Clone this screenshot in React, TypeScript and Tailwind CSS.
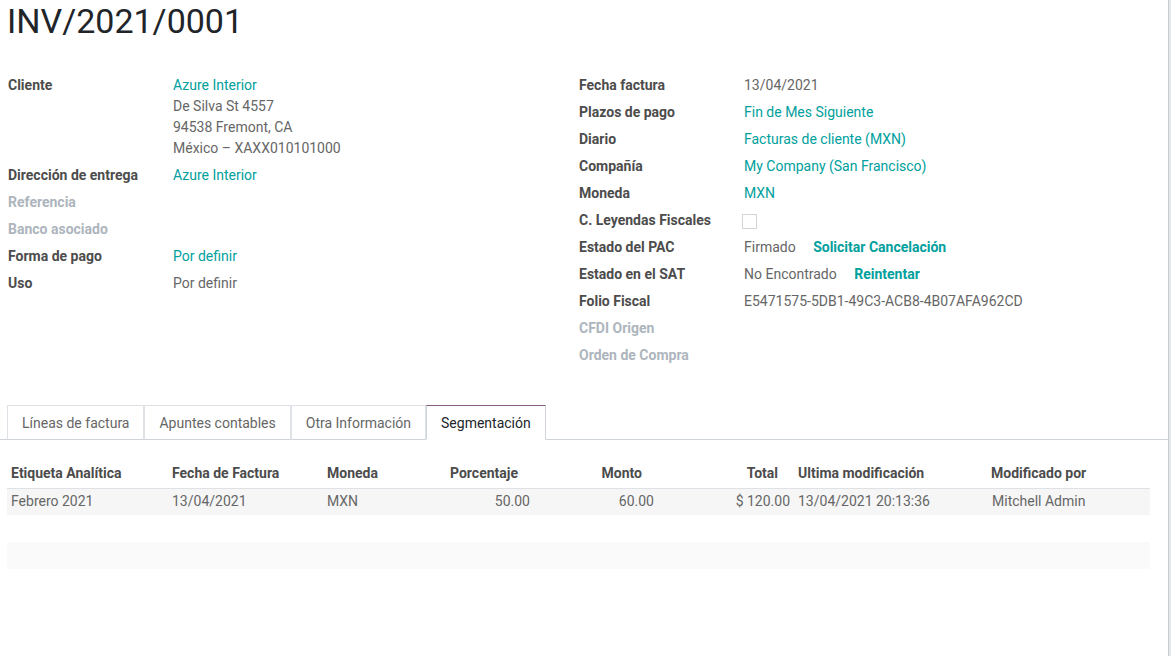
import React from "react";

const teal = "text-[#00a09d]";

type Field = { label: string; value?: React.ReactNode; muted?: boolean };

function FieldRow({ label, value, muted }: Field) {
  return (
    <div className="flex pb-[6px]">
      <div
        className={`w-[165px] shrink-0 font-bold leading-[21px] ${
          muted ? "text-[#adb5bd]" : "text-[#4c4c4c]"
        }`}
      >
        {label}
      </div>
      <div className="leading-[21px] text-[#666666]">{value}</div>
    </div>
  );
}

const leftFields: Field[] = [
  {
    label: "Cliente",
    value: (
      <div>
        <div className={teal}>Azure Interior</div>
        <div>De Silva St 4557</div>
        <div>94538 Fremont, CA</div>
        <div>México – XAXX010101000</div>
      </div>
    ),
  },
  { label: "Dirección de entrega", value: <span className={teal}>Azure Interior</span> },
  { label: "Referencia", muted: true },
  { label: "Banco asociado", muted: true },
  { label: "Forma de pago", value: <span className={teal}>Por definir</span> },
  { label: "Uso", value: "Por definir" },
];

const rightFields: Field[] = [
  { label: "Fecha factura", value: "13/04/2021" },
  { label: "Plazos de pago", value: <span className={teal}>Fin de Mes Siguiente</span> },
  { label: "Diario", value: <span className={teal}>Facturas de cliente (MXN)</span> },
  { label: "Compañía", value: <span className={teal}>My Company (San Francisco)</span> },
  { label: "Moneda", value: <span className={teal}>MXN</span> },
  {
    label: "C. Leyendas Fiscales",
    value: (
      <div className="flex h-[21px] items-center">
        <span className="ml-[-2px] mt-[1px] block h-[15px] w-[15px] border border-[#d4d4d4] bg-white" />
      </div>
    ),
  },
  {
    label: "Estado del PAC",
    value: (
      <span>
        Firmado <span className={`ml-[14px] font-bold ${teal}`}>Solicitar Cancelación</span>
      </span>
    ),
  },
  {
    label: "Estado en el SAT",
    value: (
      <span>
        No Encontrado <span className={`ml-[14px] font-bold ${teal}`}>Reintentar</span>
      </span>
    ),
  },
  { label: "Folio Fiscal", value: "E5471575-5DB1-49C3-ACB8-4B07AFA962CD" },
  { label: "CFDI Origen", muted: true },
  { label: "Orden de Compra", muted: true },
];

const tabs = ["Líneas de factura", "Apuntes contables", "Otra Información", "Segmentación"];

const cols = [
  { name: "Etiqueta Analítica", w: "w-[161px]", right: false },
  { name: "Fecha de Factura", w: "w-[155px]", right: false },
  { name: "Moneda", w: "w-[122px]", right: false },
  { name: "Porcentaje", w: "w-[89px]", right: true },
  { name: "Monto", w: "w-[124px]", right: true },
  { name: "Total", w: "w-[136px]", right: true },
  { name: "Ultima modificación", w: "w-[193px]", right: false },
  { name: "Modificado por", w: "w-[163px]", right: false },
];

const row = [
  "Febrero 2021",
  "13/04/2021",
  "MXN",
  "50.00",
  "60.00",
  "$ 120.00",
  "13/04/2021 20:13:36",
  "Mitchell Admin",
];

export default function App() {
  return (
    <div
      className="flex min-h-[656px] bg-white text-[14px] text-[#666666]"
      style={{ fontFamily: "Roboto, 'Noto Sans', sans-serif" }}
    >
      <div className="w-[1168px] shrink-0">
        <h1 className="pl-[7px] pt-[1px] text-[34px] font-normal leading-[40px] text-[#212529]">
          INV/2021/0001
        </h1>

        <div className="mt-[34px] flex pl-[8px]">
          <div className="w-[571px]">
            {leftFields.map((f) => (
              <FieldRow key={f.label} {...f} />
            ))}
          </div>
          <div className="flex-1">
            {rightFields.map((f) => (
              <FieldRow key={f.label} {...f} />
            ))}
          </div>
        </div>

        <div className="mt-[33px] flex border-b border-[#ced4da] pl-[7px]">
          {tabs.map((t, i) => {
            const active = i === tabs.length - 1;
            return (
              <div
                key={t}
                className={`-mb-px h-[35px] border px-[14px] leading-[34px] ${
                  active
                    ? "border-[#ced4da] border-t-[#875a7b] border-b-white bg-white text-[#212529]"
                    : "border-[#dee2e6] border-b-[#ced4da] text-[#666666]"
                }`}
              >
                {t}
              </div>
            );
          })}
        </div>

        <div className="mt-[20px] pl-[7px]">
          <table className="table-fixed border-collapse">
            <thead>
              <tr className="h-[28px] border-b border-[#dee2e6]">
                {cols.map((c) => (
                  <th
                    key={c.name}
                    className={`${c.w} px-[4px] py-0 font-bold text-[#4c4c4c] ${
                      c.right ? "pr-[16px] text-right" : "text-left"
                    }`}
                  >
                    {c.name}
                  </th>
                ))}
              </tr>
            </thead>
            <tbody>
              <tr className="h-[27px] bg-[#f6f6f6]">
                {row.map((v, i) => (
                  <td
                    key={i}
                    className={`h-[27px] px-[4px] py-0 ${cols[i].right ? "text-right" : "text-left"} ${
                      i === 7 ? "pl-[5px]" : ""
                    }`}
                  >
                    {v}
                  </td>
                ))}
              </tr>
              <tr className="h-[27px] bg-white">
                <td colSpan={8} className="h-[27px]" />
              </tr>
              <tr className="h-[27px] bg-[#fafafa]">
                <td colSpan={8} className="h-[27px]" />
              </tr>
            </tbody>
          </table>
        </div>
      </div>
      <div className="w-[3px] shrink-0 border-l border-[#c8cbd0] bg-[#e4e6ea]" />
    </div>
  );
}
